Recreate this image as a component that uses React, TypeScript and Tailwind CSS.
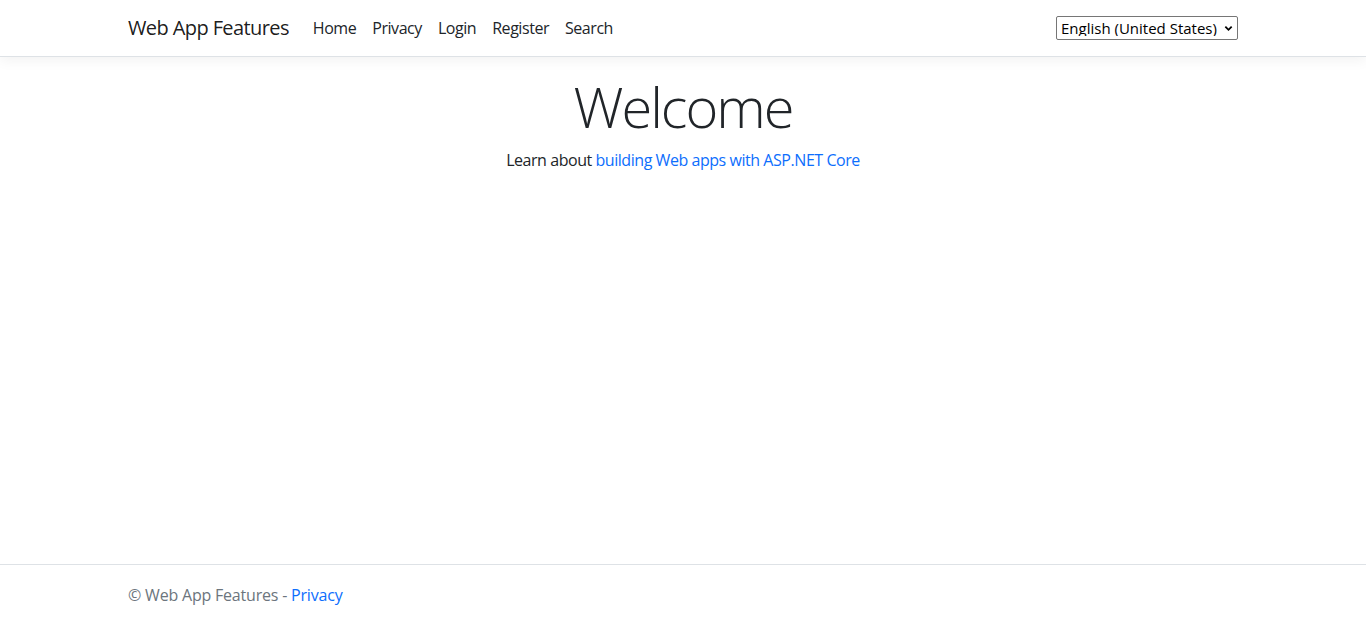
import { useState } from "react";

const font = { fontFamily: '"Open Sans", "Noto Sans", sans-serif' };

function CultureSelect() {
  const [culture, setCulture] = useState("en-US");
  return (
    <div className="relative mr-[3px]">
      <select
        value={culture}
        onChange={(e) => setCulture(e.target.value)}
        className="h-6 w-[182px] appearance-none rounded-[2px] border border-[#767676] bg-white pl-1 pr-5 text-[15px] leading-none tracking-normal text-black"
      >
        <option value="en-US">English (United States)</option>
        <option value="fr-FR">français (France)</option>
        <option value="de-DE">Deutsch (Deutschland)</option>
      </select>
      <svg
        viewBox="0 0 10 10"
        className="pointer-events-none absolute right-[5px] top-[8px] h-[9px] w-[9px]"
      >
        <path d="M1.5 3 L5 6.5 L8.5 3" fill="none" stroke="#000" strokeWidth="2" />
      </svg>
    </div>
  );
}

export default function App() {
  return (
    <div
      className="flex h-[625px] flex-col bg-white tracking-[-0.45px] text-[#212529]"
      style={font}
    >
      <header>
        <nav className="mb-4 border-b border-[#dee2e6] bg-white py-2 shadow-[0_4px_12px_rgba(0,0,0,0.05)]">
          <div className="mx-auto flex w-[1140px] items-center pl-[15px] pr-3">
            <a
              href="#"
              className="mr-4 py-[5px] text-xl leading-[30px] tracking-[-0.6px] text-black/90"
            >
              Web App Features
            </a>
            <ul className="flex flex-1 items-center text-base leading-6">
              {["Home", "Privacy", "Login", "Register", "Search"].map((item) => (
                <li key={item}>
                  <a href="#" className="block px-2 py-2 text-[#212529]">
                    {item}
                  </a>
                </li>
              ))}
            </ul>
            <CultureSelect />
          </div>
        </nav>
      </header>

      <main className="flex-1 pb-4">
        <div className="mx-auto w-[1140px] px-3 text-center">
          <h1 className="mb-2 text-[56px] font-light leading-[1.2] tracking-[-2px]">
            Welcome
          </h1>
          <p className="text-base leading-6">
            Learn about{" "}
            <a href="#" className="text-[#0d6efd]">
              building Web apps with ASP.NET Core
            </a>
          </p>
        </div>
      </main>

      <footer className="border-t border-[#dee2e6] text-base leading-[60px] tracking-[-0.2px] whitespace-nowrap text-[#6c757d]">
        <div className="mx-auto w-[1140px] pl-[15px] pr-3">
          © Web App Features -{" "}
          <a href="#" className="text-[#0d6efd]">
            Privacy
          </a>
        </div>
      </footer>
    </div>
  );
}
